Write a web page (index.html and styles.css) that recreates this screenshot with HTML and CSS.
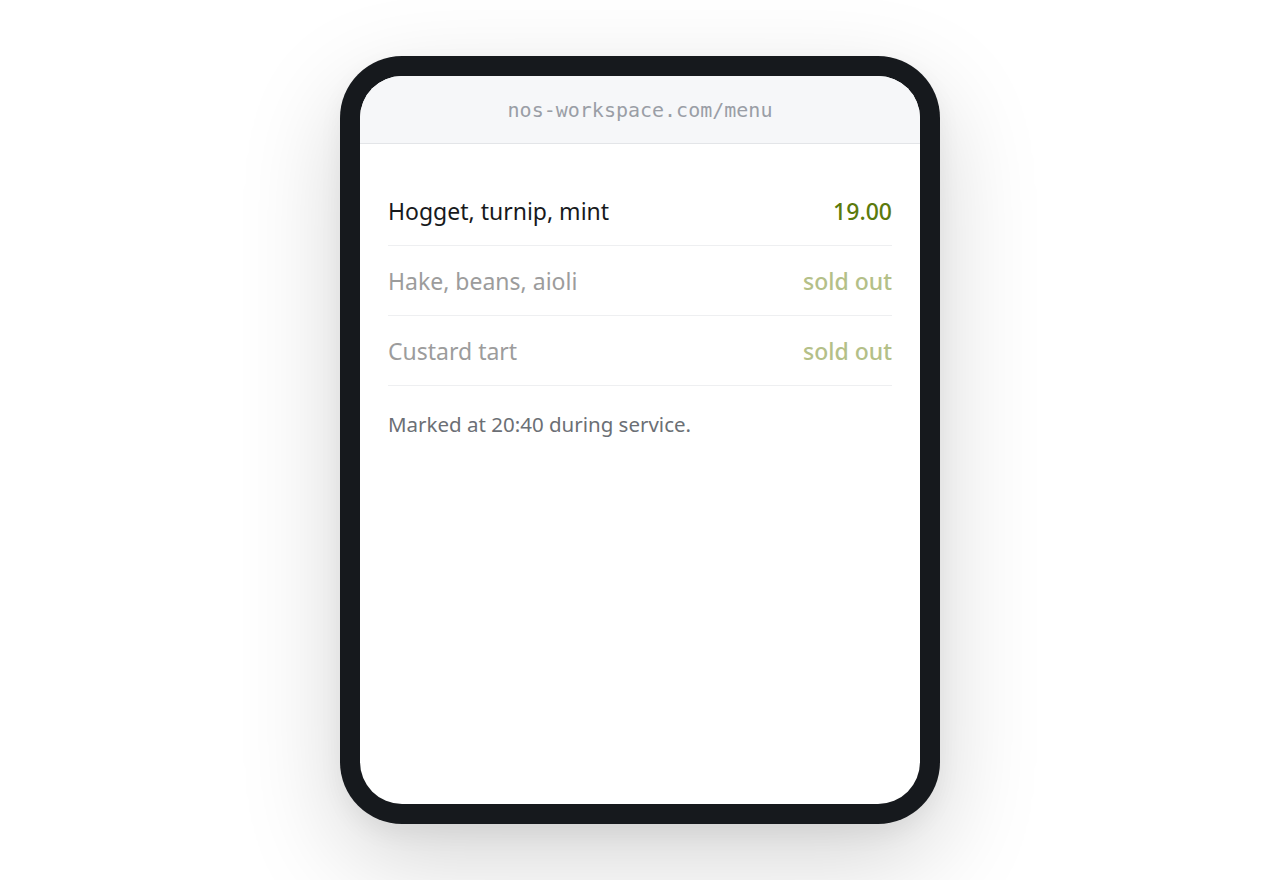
FILE: index.html
```html
<!DOCTYPE html>
<html>
<head>
<meta charset="utf-8">
<link rel="stylesheet" href="styles.css">
</head>
<body>
<div class="stage">
  <div class="device">
    <div class="screen">
      <div class="urlbar">nos-workspace.com/menu</div>
      <div class="content">
        <div class="row">
          <span class="name">Hogget, turnip, mint</span>
          <span class="price">19.00</span>
        </div>
        <div class="row sold">
          <span class="name">Hake, beans, aioli</span>
          <span class="price">sold out</span>
        </div>
        <div class="row sold">
          <span class="name">Custard tart</span>
          <span class="price">sold out</span>
        </div>
        <p class="note">Marked at 20:40 during service.</p>
      </div>
    </div>
  </div>
</div>
</body>
</html>
```
FILE: styles.css
```css
html, body {
  margin: 0;
  padding: 0;
  background: #ffffff;
}
.stage {
  width: 1280px;
  height: 880px;
  display: flex;
  align-items: center;
  justify-content: center;
}
.device {
  width: 600px;
  height: 768px;
  box-sizing: border-box;
  background: #16191d;
  border-radius: 62px;
  padding: 20px;
  box-shadow: 0 36px 100px rgba(0, 0, 0, 0.17), 0 10px 24px rgba(0, 0, 0, 0.05);
}
.screen {
  width: 100%;
  height: 100%;
  background: #ffffff;
  border-radius: 42px;
  overflow: hidden;
  display: flex;
  flex-direction: column;
}
.urlbar {
  height: 67px;
  flex: none;
  background: #f6f7f9;
  border-bottom: 1px solid #e3e5e8;
  display: flex;
  align-items: center;
  justify-content: center;
  font-family: "DejaVu Sans Mono", "Liberation Mono", monospace;
  font-size: 20px;
  color: #9a9ea6;
}
.content {
  padding: 32px 28px 0;
  font-family: "Noto Sans", "Open Sans", sans-serif;
}
.row {
  height: 69px;
  border-bottom: 1px solid #eeeff1;
  display: flex;
  align-items: center;
  justify-content: space-between;
  font-size: 23px;
}
.name {
  color: #17191c;
}
.price {
  color: #5b7a0c;
  font-weight: 500;
}
.sold .name {
  color: #9c9c9c;
}
.sold .price {
  color: #b4c088;
}
.note {
  margin: 24px 0 0;
  font-size: 20.5px;
  color: #6b6f75;
}
```
